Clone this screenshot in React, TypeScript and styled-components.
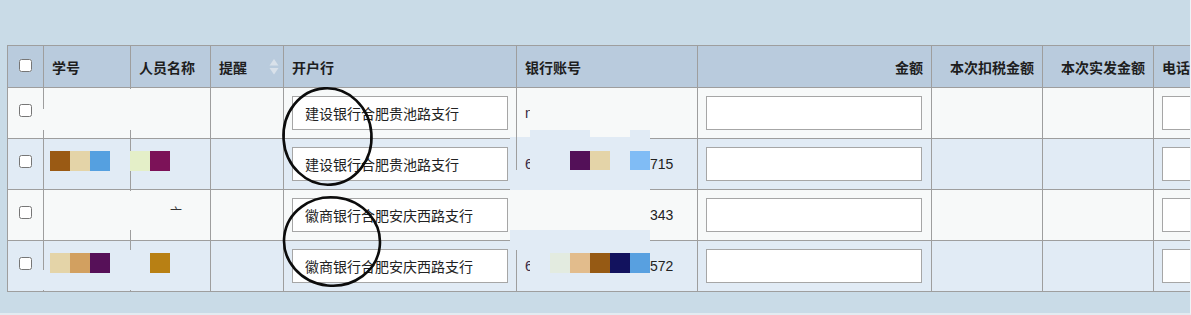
import React from 'react';
import styled, { createGlobalStyle } from 'styled-components';

const ROW_A = '#f7f9f9';
const ROW_B = '#e1ebf5';
const LINE = '#9e9e9e';

const GlobalStyle = createGlobalStyle`
  html, body {
    margin: 0;
    padding: 0;
  }
  body {
    background: #c9dbe7;
    font-family: 'Liberation Sans', 'Noto Sans CJK SC', sans-serif;
    font-size: 14px;
    color: #222;
  }
`;

type Column = {
  key: string;
  title?: string;
  width: number;
  right?: boolean;
  sortable?: boolean;
};

const columns: Column[] = [
  { key: 'check', width: 36 },
  { key: 'no', title: '学号', width: 87 },
  { key: 'name', title: '人员名称', width: 80 },
  { key: 'remind', title: '提醒', width: 73, sortable: true },
  { key: 'bank', title: '开户行', width: 233 },
  { key: 'account', title: '银行账号', width: 181 },
  { key: 'amount', title: '金额', width: 234, right: true },
  { key: 'tax', title: '本次扣税金额', width: 111, right: true },
  { key: 'pay', title: '本次实发金额', width: 111, right: true },
  { key: 'phone', title: '电话号码', width: 240 },
];

// a block is a 20px square: a colour, or null for an empty one
type Block = string | null;

type Row = {
  bank: string;
  no: { offset: number; blocks: Block[] };
  name: { offset: number; blocks: Block[]; text?: string };
  account: { lead?: string; blocks: Block[]; tail?: string };
};

const rows: Row[] = [
  {
    bank: '建设银行合肥贵池路支行',
    no: { offset: 0, blocks: [] },
    name: { offset: 0, blocks: [] },
    account: { lead: 'n', blocks: [] },
  },
  {
    bank: '建设银行合肥贵池路支行',
    no: { offset: -2, blocks: ['#9a5a14', '#e4d4a8', '#55a0e0'] },
    name: { offset: -9, blocks: ['#e4efc8', '#7c1258'] },
    account: {
      lead: '6',
      blocks: [null, null, '#531058', '#e4d4a8', null, '#80bcf5'],
      tail: '715',
    },
  },
  {
    bank: '徽商银行合肥安庆西路支行',
    no: { offset: 0, blocks: [] },
    name: { offset: 31, blocks: [], text: '亠' },
    account: { blocks: [null, null, null, null, null, null], tail: '343' },
  },
  {
    bank: '徽商银行合肥安庆西路支行',
    no: { offset: -2, blocks: ['#e4d4a8', '#d2a060', '#561058'] },
    name: { offset: 11, blocks: ['#b88014'] },
    account: {
      lead: '6',
      blocks: [null, '#e3ebe0', '#e2bc8c', '#965a14', '#12125e', '#58a0e0'],
      tail: '572',
    },
  },
];

// covered bits of the grid lines in the screenshot
const patches = [
  { x: 127, y: 89, w: 6, h: 41, c: ROW_A },
  { x: 40, y: 109, w: 6, h: 21, c: ROW_A },
  { x: 530, y: 130, w: 60, h: 8, c: ROW_B },
  { x: 630, y: 130, w: 20, h: 8, c: ROW_B },
  { x: 510, y: 137, w: 6, h: 3, c: ROW_B },
  { x: 517, y: 137, w: 133, h: 3, c: ROW_B },
  { x: 510, y: 170, w: 140, h: 20, c: ROW_B },
  { x: 510, y: 190, w: 140, h: 40, c: ROW_A },
  { x: 510, y: 230, w: 140, h: 20, c: ROW_B },
  { x: 127, y: 191, w: 6, h: 39, c: ROW_A },
  { x: 127, y: 250, w: 6, h: 40, c: ROW_B },
  { x: 40, y: 270, w: 6, h: 20, c: ROW_B },
];

const SortIcon = () => (
  <svg width="10" height="16" viewBox="0 0 10 16">
    <polygon points="5,0 9.5,6.5 0.5,6.5" fill="#d9e1ea" />
    <polygon points="0.5,9 9.5,9 5,15.5" fill="#d9e1ea" />
  </svg>
);

const App = () => {
  return (
    <>
      <GlobalStyle />
      <Page>
        <TableWrap>
          <Grid>
            <colgroup>
              {columns.map((col) => (
                <Col key={col.key} $w={col.width} />
              ))}
            </colgroup>
            <thead>
              <tr>
                {columns.map((col) =>
                  col.key === 'check' ? (
                    <HeadCell key={col.key} $center>
                      <Check type="checkbox" $head />
                    </HeadCell>
                  ) : (
                    <HeadCell key={col.key} $right={col.right} $sortable={col.sortable}>
                      {col.sortable ? (
                        <HeadInner>
                          <span>{col.title}</span>
                          <SortIcon />
                        </HeadInner>
                      ) : (
                        col.title
                      )}
                    </HeadCell>
                  )
                )}
              </tr>
            </thead>
            <tbody>
              {rows.map((row, i) => (
                <BodyRow key={i} $bg={i % 2 === 0 ? ROW_A : ROW_B}>
                  <Cell $center>
                    <Check type="checkbox" />
                  </Cell>
                  <Cell>
                    <Blocks $offset={row.no.offset}>
                      {row.no.blocks.map((c, j) => (
                        <Swatch key={j} $c={c} />
                      ))}
                    </Blocks>
                  </Cell>
                  <Cell>
                    <Blocks $offset={row.name.offset}>
                      {row.name.blocks.map((c, j) => (
                        <Swatch key={j} $c={c} />
                      ))}
                      {row.name.text && <Fragment>{row.name.text}</Fragment>}
                    </Blocks>
                  </Cell>
                  <Cell />
                  <Cell>
                    <Field defaultValue={row.bank} readOnly />
                  </Cell>
                  <Cell>
                    <Blocks $offset={0}>
                      <Clip>{row.account.lead}</Clip>
                      {row.account.blocks.map((c, j) => (
                        <Swatch key={j} $c={c} />
                      ))}
                      {row.account.tail && <Digits>{row.account.tail}</Digits>}
                    </Blocks>
                  </Cell>
                  <Cell>
                    <Field readOnly />
                  </Cell>
                  <Cell />
                  <Cell />
                  <Cell>
                    <Field readOnly />
                  </Cell>
                </BodyRow>
              ))}
            </tbody>
          </Grid>
        </TableWrap>

        {patches.map((p, i) => (
          <Patch key={i} $x={p.x} $y={p.y} $w={p.w} $h={p.h} $c={p.c} />
        ))}

        <Marks width="1191" height="315" viewBox="0 0 1191 315">
          <ellipse cx="327.5" cy="136.5" rx="44" ry="48.2" transform="rotate(-4 327.5 136.5)" />
          <ellipse cx="332" cy="241.5" rx="48" ry="44.2" transform="rotate(6 332 241.5)" />
        </Marks>
      </Page>
    </>
  );
};

export default App;

const Page = styled.div`
  position: relative;
  box-sizing: border-box;
  width: 1191px;
  height: 315px;
  overflow: hidden;
  padding: 45px 0 0 7px;
  background: #c9dbe7;
  border-right: 1px solid #eef3f7;
  border-bottom: 2px solid #e3ebf1;
`;

const TableWrap = styled.div`
  width: 1183px;
  overflow: hidden;
`;

const Grid = styled.table`
  border-collapse: collapse;
  table-layout: fixed;
  width: ${columns.reduce((s, c) => s + c.width, 0)}px;
`;

const Col = styled.col<{ $w: number }>`
  width: ${(p) => p.$w}px;
`;

const HeadCell = styled.th<{ $right?: boolean; $center?: boolean; $sortable?: boolean }>`
  height: 42px;
  box-sizing: border-box;
  padding: ${(p) => (p.$sortable ? '0 4px 0 8px' : '0 8px')};
  border: 1px solid ${LINE};
  background: #b9cbdd;
  font-family: 'Liberation Sans', 'Noto Sans CJK SC', sans-serif;
  font-size: 14px;
  font-weight: bold;
  color: #1e1e1e;
  white-space: nowrap;
  overflow: hidden;
  text-align: ${(p) => (p.$center ? 'center' : p.$right ? 'right' : 'left')};
  vertical-align: middle;
`;

const HeadInner = styled.div`
  display: flex;
  align-items: center;
  justify-content: space-between;
`;

const BodyRow = styled.tr<{ $bg: string }>`
  background: ${(p) => p.$bg};
`;

const Cell = styled.td<{ $center?: boolean }>`
  height: 51px;
  box-sizing: border-box;
  padding: 0 8px;
  border: 1px solid ${LINE};
  vertical-align: middle;
  white-space: nowrap;
  text-align: ${(p) => (p.$center ? 'center' : 'left')};
  color: #222;
`;

const Check = styled.input<{ $head?: boolean }>`
  display: block;
  width: 13px;
  height: 13px;
  margin: ${(p) => (p.$head ? '0 auto 3px' : '0 auto 6px')};
`;

const Blocks = styled.div<{ $offset: number }>`
  display: flex;
  align-items: center;
  height: 27px;
  margin-left: ${(p) => p.$offset}px;
`;

const Swatch = styled.span<{ $c: Block }>`
  flex: none;
  width: 20px;
  height: 20px;
  margin-bottom: 7px;
  background: ${(p) => p.$c ?? 'transparent'};
`;

const Clip = styled.span`
  flex: none;
  width: 5px;
  overflow: hidden;
  font-size: 14px;
  line-height: 20px;
  color: #3a2a44;
`;

const Digits = styled.span`
  font-size: 14px;
  line-height: 20px;
  color: #222;
`;

const Fragment = styled.span`
  font-family: 'Noto Sans CJK SC', sans-serif;
  font-size: 12px;
  line-height: 20px;
  margin-bottom: 6px;
  color: #333;
`;

const Field = styled.input`
  display: block;
  box-sizing: border-box;
  width: 216px;
  height: 34px;
  padding: 0 12px;
  border: 1px solid #a6a6a6;
  border-radius: 0;
  background: #fff;
  font-family: 'Liberation Sans', 'Noto Sans CJK SC', sans-serif;
  font-size: 14px;
  color: #222;
  outline: none;
`;

const Patch = styled.div<{ $x: number; $y: number; $w: number; $h: number; $c: string }>`
  position: absolute;
  left: ${(p) => p.$x}px;
  top: ${(p) => p.$y}px;
  width: ${(p) => p.$w}px;
  height: ${(p) => p.$h}px;
  background: ${(p) => p.$c};
`;

const Marks = styled.svg`
  position: absolute;
  left: 0;
  top: 0;
  pointer-events: none;

  ellipse {
    fill: none;
    stroke: #0c0c0c;
    stroke-width: 2.6;
  }
`;
